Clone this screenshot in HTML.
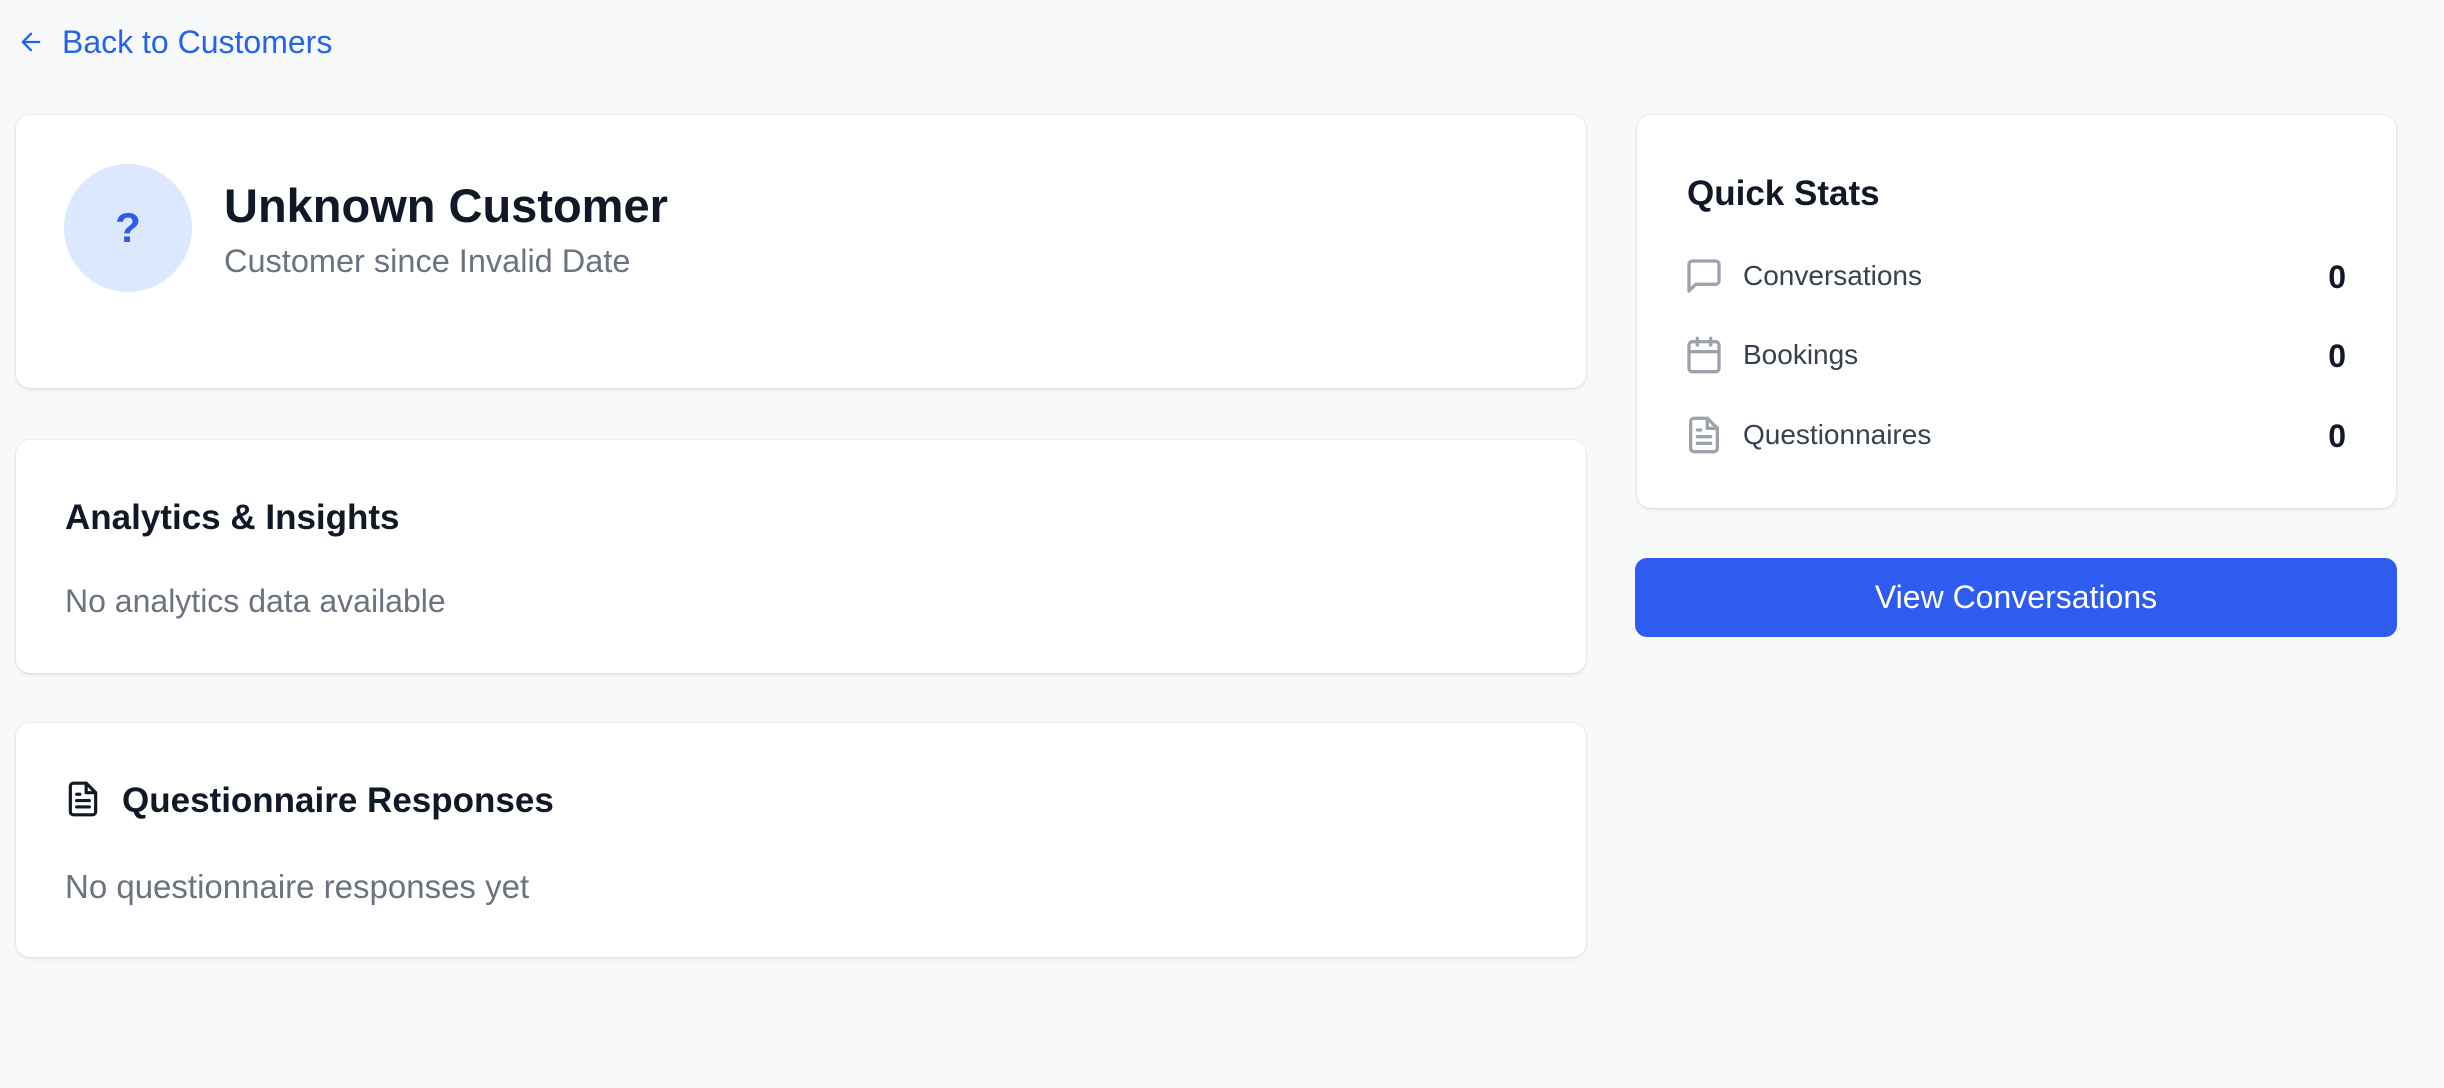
<!DOCTYPE html>
<html><head><meta charset="utf-8"><style>
*{margin:0;padding:0;box-sizing:border-box}
body{width:2444px;height:1088px;background:#f8f9fb;font-family:"Liberation Sans",Arial,sans-serif;position:relative;overflow:hidden}
.a{position:absolute;white-space:nowrap}
.card{position:absolute;background:#fff;border-radius:14px;box-shadow:0 2px 4px rgba(0,0,0,.08),0 0 0 1px rgba(0,0,0,.04)}
.h{font-weight:bold;color:#111827;font-size:35px;line-height:1}
.g{color:#6b7280;font-size:32px;line-height:1}
.lbl{color:#374151;font-size:28px;line-height:1}
.num{font-weight:bold;color:#111827;font-size:32px;line-height:1}
</style></head><body>
<svg class="a" style="left:17px;top:28px" width="28" height="28" viewBox="0 0 24 24" fill="none" stroke="#2563eb" stroke-width="2" stroke-linecap="round" stroke-linejoin="round"><path d="M19 12H5M12 19l-7-7 7-7"/></svg>
<div class="a" style="left:62px;top:26px;font-size:32px;color:#2563eb;line-height:32px">Back to Customers</div>

<div class="card" style="left:16px;top:115px;width:1570px;height:273px"></div>
<div class="a" style="left:64px;top:164px;width:128px;height:128px;border-radius:50%;background:#dbe8fe"></div>
<div class="a" style="left:64px;top:204px;width:128px;text-align:center;font-weight:bold;font-size:42px;color:#2f5cf0;line-height:48px">?</div>
<div class="a h" style="left:224px;top:182px;font-size:47px">Unknown Customer</div>
<div class="a g" style="left:224px;top:245px;font-size:32.5px">Customer since Invalid Date</div>

<div class="card" style="left:16px;top:440px;width:1570px;height:233px"></div>
<div class="a h" style="left:65px;top:500px">Analytics &amp; Insights</div>
<div class="a g" style="left:65px;top:585px">No analytics data available</div>

<div class="card" style="left:16px;top:723px;width:1570px;height:234px"></div>
<svg class="a" style="left:64px;top:780px" width="38" height="38" viewBox="0 0 24 24" fill="none" stroke="#111827" stroke-width="2" stroke-linecap="round" stroke-linejoin="round"><path d="M14 2H6a2 2 0 0 0-2 2v16a2 2 0 0 0 2 2h12a2 2 0 0 0 2-2V8z"/><path d="M14 2v6h6M16 13H8M16 17H8M10 9H8"/></svg>
<div class="a h" style="left:122px;top:783px">Questionnaire Responses</div>
<div class="a g" style="left:65px;top:870px;font-size:33px">No questionnaire responses yet</div>

<div class="card" style="left:1637px;top:115px;width:759px;height:393px"></div>
<div class="a h" style="left:1687px;top:176px">Quick Stats</div>
<svg class="a" style="left:1684px;top:256px" width="40" height="40" viewBox="0 0 24 24" fill="none" stroke="#9ca3af" stroke-width="2" stroke-linecap="round" stroke-linejoin="round"><path d="M21 15a2 2 0 0 1-2 2H7l-4 4V5a2 2 0 0 1 2-2h14a2 2 0 0 1 2 2z"/></svg>
<div class="a lbl" style="left:1743px;top:262px">Conversations</div>
<div class="a num" style="left:2300px;width:46px;text-align:right;top:261px">0</div>
<svg class="a" style="left:1684px;top:335px" width="40" height="40" viewBox="0 0 24 24" fill="none" stroke="#9ca3af" stroke-width="2" stroke-linecap="round" stroke-linejoin="round"><rect x="3" y="4" width="18" height="18" rx="2"/><path d="M16 2v4M8 2v4M3 10h18"/></svg>
<div class="a lbl" style="left:1743px;top:341px">Bookings</div>
<div class="a num" style="left:2300px;width:46px;text-align:right;top:340px">0</div>
<svg class="a" style="left:1684px;top:415px" width="40" height="40" viewBox="0 0 24 24" fill="none" stroke="#9ca3af" stroke-width="2" stroke-linecap="round" stroke-linejoin="round"><path d="M14 2H6a2 2 0 0 0-2 2v16a2 2 0 0 0 2 2h12a2 2 0 0 0 2-2V8z"/><path d="M14 2v6h6M16 13H8M16 17H8M10 9H8"/></svg>
<div class="a lbl" style="left:1743px;top:421px">Questionnaires</div>
<div class="a num" style="left:2300px;width:46px;text-align:right;top:420px">0</div>

<div class="a" style="left:1635px;top:558px;width:762px;height:79px;border-radius:12px;background:#2f5cf0;color:#fff;font-size:32px;text-align:center;line-height:79px">View Conversations</div>
</body></html>
